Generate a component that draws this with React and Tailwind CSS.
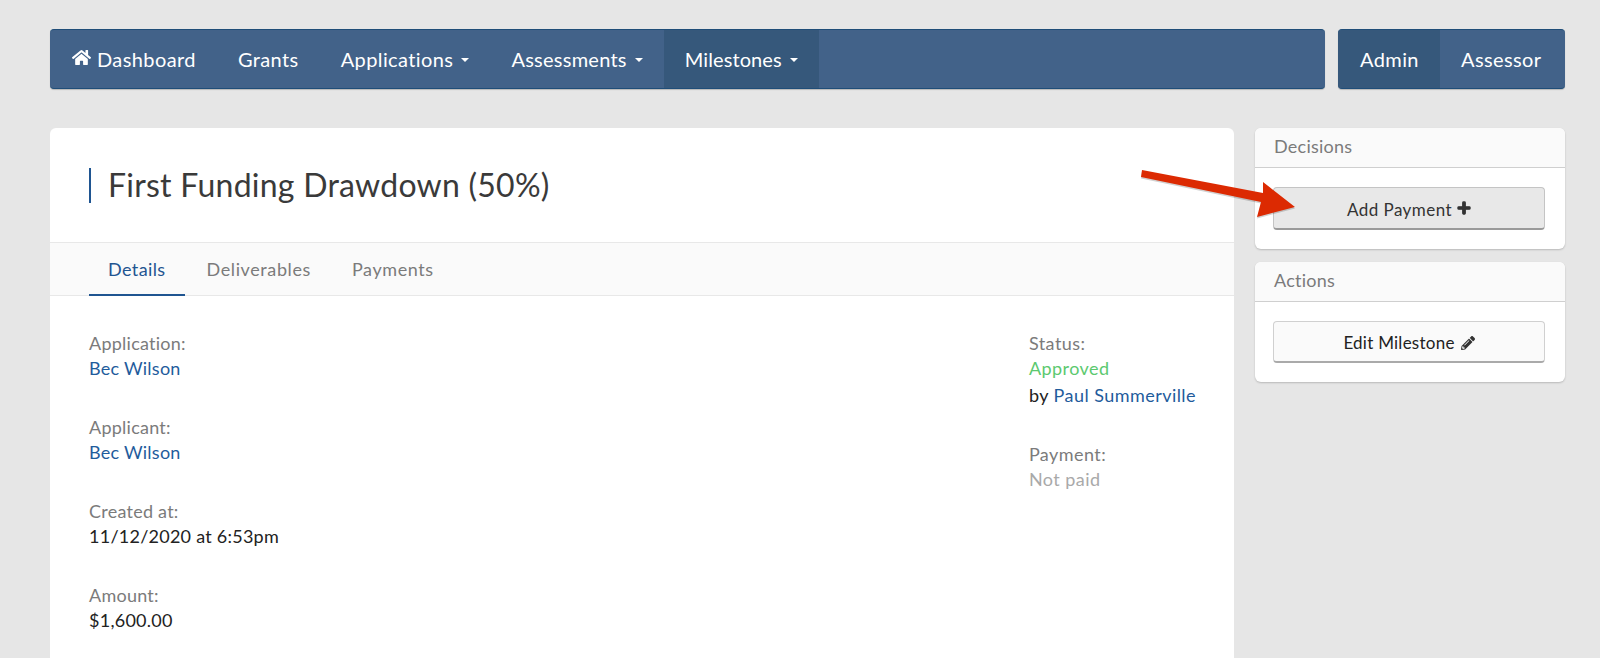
import { FaHome, FaPlus, FaPencilAlt } from "react-icons/fa";

function NavItem({ children, active, caret }) {
  return (
    <a className={`flex h-full items-center px-[21px] text-white first:pl-[22px] ${active ? "bg-[#36587b]" : ""}`}>
      {children}
      {caret && <span className="ml-[8px] mt-[1px] h-0 w-0 border-x-[4.5px] border-t-[4.5px] border-x-transparent border-t-white" />}
    </a>
  );
}

function Field({ label, children, className }) {
  return (
    <div className={className}>
      <div className="h-[26px] leading-[28px] text-[#7b7b7b]">{label}</div>
      {children}
    </div>
  );
}

function SidePanel({ title, children, className }) {
  return (
    <div className={`overflow-hidden rounded-[6px] bg-white shadow-[0_1px_2px_rgba(0,0,0,0.2)] ${className}`}>
      <div className="h-[40px] border-b border-[#cfcfcf] bg-[#fafafa] px-[19px] leading-[36px] text-[#7b7b7b]">{title}</div>
      <div className="pt-[19px] pr-[20px] pb-[19px] pl-[18px]">{children}</div>
    </div>
  );
}

export default function App() {
  return (
    <div className="relative h-screen overflow-hidden bg-[#e6e6e6] pt-[29px] pr-[35px] pl-[50px] font-['Lato','Noto_Sans',sans-serif] text-[18px] leading-[26px] tracking-[0.25px] text-[#222]">
      {/* Top nav */}
      <div className="flex h-[60px] gap-[13px] text-[20px] tracking-[0.4px]">
        <nav className="flex flex-1 overflow-hidden rounded-[4px] border-y border-[#1f4d78] bg-[#426289] shadow-[0_1px_1px_rgba(0,0,0,0.2)]">
          <NavItem><FaHome className="mr-[6px] mb-[3px] text-[19px]" />Dashboard</NavItem>
          <NavItem>Grants</NavItem>
          <NavItem caret>Applications</NavItem>
          <NavItem caret><span className="tracking-[0.25px]">Assessments</span></NavItem>
          <NavItem caret active><span className="tracking-[0.1px]">Milestones</span></NavItem>
        </nav>
        <nav className="flex w-[227px] overflow-hidden rounded-[4px] border-y border-[#1f4d78] bg-[#426289] shadow-[0_1px_1px_rgba(0,0,0,0.2)]">
          <NavItem active>Admin</NavItem>
          <NavItem>Assessor</NavItem>
        </nav>
      </div>

      <div className="mt-[39px] flex gap-[21px]">
        {/* Main card */}
        <main className="h-[600px] w-[1184px] rounded-t-[6px] bg-white">
          <div className="pt-[40px] pr-[38px] pb-[39px] pl-[39px]">
            <h1 className="h-[35px] border-l-2 border-[#1f5591] pl-[17px] text-[32px] leading-[33px] tracking-[0.25px] text-[#3a3a3a]">First Funding Drawdown (50%)</h1>
          </div>
          <div className="flex h-[54px] gap-[41px] border-y border-[#e8e8e8] bg-[#fafafa] px-[39px]">
            <a className="-mb-px flex items-center border-b-[2px] border-[#1f5591] px-[19px] tracking-[0.4px] text-[#1f5591]">Details</a>
            <a className="-ml-[19px] flex items-center tracking-[0.6px] text-[#7b7b7b]">Deliverables</a>
            <a className="flex items-center tracking-[0.6px] text-[#7b7b7b]">Payments</a>
          </div>
          <div className="flex justify-between pt-[33px] pr-[38px] pl-[39px]">
            <div>
              <Field label="Application:"><a className="text-[#1f5c9c]">Bec Wilson</a></Field>
              <Field label="Applicant:" className="mt-[32px]"><a className="text-[#1f5c9c]">Bec Wilson</a></Field>
              <Field label="Created at:" className="mt-[32px]">11/12/2020 at 6:53pm</Field>
              <Field label="Amount:" className="mt-[32px]">$1,600.00</Field>
            </div>
            <div className="tracking-[0.45px]">
              <Field label="Status:"><div className="text-[#5cc96f]">Approved</div></Field>
              <div className="mt-[1px]">by <a className="text-[#1f5c9c]">Paul Summerville</a></div>
              <Field label="Payment:" className="mt-[32px]"><div className="text-[#a9a9a9]">Not paid</div></Field>
            </div>
          </div>
        </main>

        {/* Sidebar */}
        <aside className="flex-1">
          <SidePanel title="Decisions">
            <button className="flex h-[43px] w-full items-center justify-center gap-[5px] rounded-[4px] border border-b-2 border-[#c4c4c4] border-b-[#9a9a9a] bg-[#e8e8e8] pt-[3px] text-[17px] tracking-[0.45px] text-[#333]">
              Add Payment <FaPlus className="mb-[4px] text-[14px]" stroke="currentColor" strokeWidth={40} />
            </button>
          </SidePanel>
          <SidePanel title="Actions" className="mt-[13px]">
            <button className="flex h-[42px] w-full items-center justify-center gap-[6px] rounded-[4px] border border-b-2 border-[#d0d0d0] border-b-[#aaaaaa] bg-[#fafafa] pt-[2px] text-[17px] tracking-[0.25px] text-[#222]">
              Edit Milestone <FaPencilAlt className="text-[14px] text-[#333]" />
            </button>
          </SidePanel>
        </aside>
      </div>

      {/* Red arrow annotation */}
      <svg className="absolute top-[165px] left-[1135px]" width="170" height="60" viewBox="1135 165 170 60">
        <polygon points="1142,170 1263,193 1263,182 1295,207 1257,217 1261,202 1141,177" fill="#000" opacity="0.18" transform="translate(0,1.5)" />
        <polygon points="1142,170 1263,193 1263,182 1295,207 1257,217 1261,202 1141,177" fill="#dc2a02" />
      </svg>
    </div>
  );
}
